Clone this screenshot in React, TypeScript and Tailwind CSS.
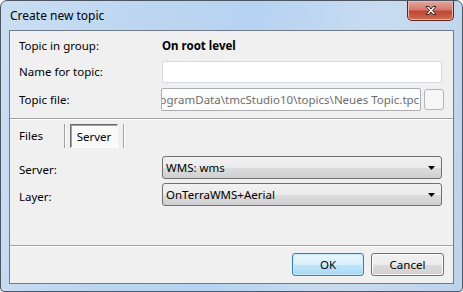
import React from 'react';

const font = { fontFamily: '"Noto Sans", "Open Sans", sans-serif' };

const Combo: React.FC<{ value: string }> = ({ value }) => (
  <div className="relative flex h-[23px] w-[280px] items-center rounded-[3px] border border-[#707070] bg-[linear-gradient(#f2f2f2_0%,#ebebeb_50%,#dddddd_51%,#cfcfcf_100%)] pl-[3px] text-[11.5px] text-black">
    <span>{value}</span>
    <svg className="absolute right-[6px] top-[9px]" width="7" height="4" viewBox="0 0 7 4">
      <path d="M0 0h7L3.5 4z" fill="#000" />
    </svg>
  </div>
);

const Button: React.FC<{ label: string; primary?: boolean }> = ({ label, primary }) => (
  <div
    className={
      'flex h-[23px] items-center justify-center rounded-[3px] border text-[11.5px] text-black ' +
      (primary
        ? 'w-[72px] border-[#3c7fb1] bg-[linear-gradient(#eaf6fd_0%,#d9f0fc_50%,#bee6fd_51%,#a7d9f5_100%)] shadow-[inset_0_0_0_1px_#c8e9fa]'
        : 'w-[73px] border-[#707070] bg-[linear-gradient(#f2f2f2_0%,#ebebeb_50%,#dddddd_51%,#cfcfcf_100%)] shadow-[inset_0_0_0_1px_#fcfcfc]')
    }
  >
    {label}
  </div>
);

export default function App() {
  return (
    <div className="h-[292px] w-[463px] bg-white" style={font}>
      <div className="relative flex h-[292px] w-[463px] flex-col rounded-t-[7px] rounded-b-[4px] border border-[#4d5561] bg-[linear-gradient(100deg,#c9def3_0%,#bcd6f0_30%,#b5d3f2_50%,#c8dcf0_75%,#bcd3ec_100%)] px-[8px] pb-[7px]">
        {/* title bar */}
        <div className="flex h-[29px] shrink-0 items-center pl-[1px] text-[12px] text-black">
          Create new topic
        </div>
        <div className="absolute right-[8px] top-0 flex h-[20px] w-[47px] items-center justify-center rounded-b-[5px] border border-t-0 border-[#5b2520] bg-[linear-gradient(#e3a99f_0%,#d57a6d_45%,#c24733_55%,#cf6a4c_100%)] shadow-[inset_0_0_0_1px_#eab6ad]">
          <svg width="14" height="11" viewBox="0 0 14 11">
            <path d="M2 1.5h3l2 2.5 2-2.5h3l-3.5 4 3.5 4h-3l-2-2.5-2 2.5H2l3.5-4z" fill="#fff" stroke="#3a2a2a" strokeWidth="1" strokeLinejoin="round" />
          </svg>
        </div>

        {/* client area */}
        <div className="flex flex-1 flex-col border border-[#6e7b8b] bg-[#f0f0f0] text-[11.5px] text-black">
          <div className="flex flex-col px-[9px] pt-[7px]">
            <div className="flex h-[16px] items-center">
              <div className="w-[143px]">Topic in group:</div>
              <div className="font-bold">On root level</div>
            </div>
            <div className="mt-[7px] flex h-[22px] items-center">
              <div className="w-[143px]">Name for topic:</div>
              <div className="h-[22px] w-[280px] rounded-[2px] border border-[#d6d9dd] bg-white" />
            </div>
            <div className="mt-[5px] flex h-[23px] items-center">
              <div className="w-[143px]">Topic file:</div>
              <div className="flex h-[23px] w-[262px] items-center justify-end overflow-hidden whitespace-nowrap rounded-[2px] border border-[#abadb3] bg-white pr-[1px] text-[#6d6d6d]">
                ogramData\tmcStudio10\topics\Neues Topic.tpc
              </div>
              <div className="ml-[3px] h-[21px] w-[20px] rounded-[3px] border border-[#b5b5b5] bg-[#f6f6f6]" />
            </div>
          </div>
          <div className="mt-[7px] h-[1px] bg-[#a0a0a0]" />
          <div className="h-[1px] bg-white" />

          {/* tabs */}
          <div className="mt-[4px] flex h-[24px] items-stretch pl-[9px]">
            <div className="flex w-[45px] items-center">Files</div>
            <div className="w-[1px] bg-[#a0a0a0]" />
            <div className="w-[1px] bg-white" />
            <div className="ml-[4px] flex w-[48px] items-center justify-center border border-t-[#6d6d6d] border-l-[#6d6d6d] border-r-white border-b-white bg-[#fafafa] pt-[1px] shadow-[inset_1px_1px_0_#a0a0a0]">
              Server
            </div>
            <div className="ml-[5px] w-[1px] bg-[#a0a0a0]" />
            <div className="w-[1px] bg-white" />
          </div>

          <div className="mt-[8px] flex flex-col px-[9px]">
            <div className="flex h-[23px] items-center">
              <div className="w-[143px] pt-[5px]">Server:</div>
              <Combo value="WMS: wms" />
            </div>
            <div className="mt-[4px] flex h-[23px] items-center">
              <div className="w-[143px] pt-[5px]">Layer:</div>
              <Combo value="OnTerraWMS+Aerial" />
            </div>
          </div>

          <div className="flex-1" />
          <div className="h-[1px] bg-[#a0a0a0]" />
          <div className="h-[1px] bg-white" />
          <div className="flex h-[36px] items-center justify-end gap-[7px] pr-[9px] pb-[1px]">
            <Button label="OK" primary />
            <Button label="Cancel" />
          </div>
        </div>
      </div>
    </div>
  );
}
